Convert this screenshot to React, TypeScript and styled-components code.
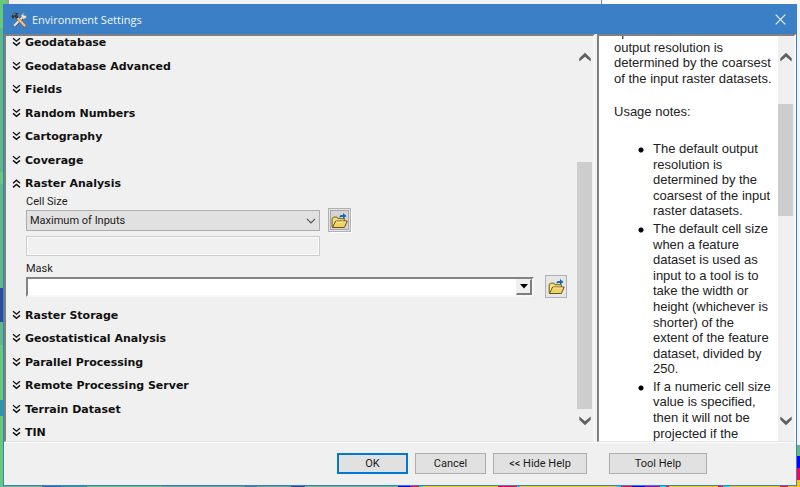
import React from "react";
import styled, { createGlobalStyle } from "styled-components";

const GlobalStyle = createGlobalStyle`
  * { box-sizing: border-box; }
  body { margin: 0; }
  button, input, select { font: inherit; color: inherit; margin: 0; border-radius: 0; }
`;

const Desktop = styled.div`
  height: 100vh;
  padding: 4px 3px 1px;
  display: flex;
  font: 11px Roboto, "Noto Sans", sans-serif;
  color: #1c1c1c;
  background:
    linear-gradient(90deg, #67c87a 0 7px, #9a9a9a 7px 9px, #f0f0f0 9px 601px, #8c8c8c 601px 602px, #fafafa 602px) top / 100% 4px no-repeat,
    linear-gradient(90deg, #63bd85 0 42px, #2a70b8 42px 61px, #2f9a9c 61px 87px, #67c87a 87px 162px, #55a98c 162px 245px, #3a86a0 245px 257px, #55a98c 257px 291px, #2a4d9c 291px 305px, #63bd85 305px 398px, #0000ff 398px 410px, #ff0050 410px 419px, #00e5f5 419px 423px, #ffc400 423px 498px, #ff0050 498px 517px, #00e5f5 517px 520px, #ffc400 520px 616px, #00e5f5 616px 621px, #ff0050 621px 632px, #0000ff 632px 645px, #b000b0 645px 660px, #00e5f5 660px 666px, #ff0050 666px 669px, #ffc400 669px 718px, #ff0050 718px 723px, #00e5f5 723px 730px, #ffc400 730px 780px, #ff0050 780px 788px, #ffc400 788px) bottom / 100% 1px no-repeat,
    linear-gradient(#f4f4f4 0 445px, #62b783 445px 456px, #0000ff 456px 468px, #ff0050 468px 480px, #ffc400 480px) right / 3px 100% no-repeat,
    linear-gradient(#67c87a 0 28px, #5fb888 28px 172px, #67c87a 172px 184px, #5fb888 184px 288px, #2a4d9c 288px 322px, #5fb888 322px 345px, #67c87a 345px 400px, #2b9aa6 400px 416px, #67c87a 416px) left / 3px 100% no-repeat;
`;

const Dialog = styled.main`
  flex: 1;
  min-width: 0;
  display: flex;
  flex-direction: column;
  background: #f0f0f0;
  border: 1px solid #3b80c6;
`;

const TitleBar = styled.header`
  flex: none;
  height: 29px;
  padding: 0 8px 0 7px;
  display: flex;
  align-items: center;
  gap: 5px;
  background: #3b80c6;
  color: #f2f7fc;
`;

const Title = styled.h1`
  flex: 1;
  margin: 0;
  font: 11px "Open Sans", "Noto Sans", sans-serif;
`;

const CloseButton = styled.button`
  padding: 0;
  width: 16px;
  height: 16px;
  display: grid;
  place-items: center;
  border: 0;
  background: none;
`;

const Panes = styled.div`
  flex: 1;
  min-height: 0;
  display: flex;
  gap: 2px;
  border-bottom: 1px solid #fff;
`;

const Pane = styled.section<{ $help?: boolean }>`
  flex: ${(p) => (p.$help ? "0 0 199px" : "1")};
  min-width: 0;
  display: flex;
  overflow: hidden;
  border: 2px solid;
  border-color: #808080 #f7f7f7 #e3e3e3 #808080;
  border-bottom-width: 1px;
  background: ${(p) => (p.$help ? "#fff" : "#f0f0f0")};
`;

const Settings = styled.div`
  flex: 1;
  min-width: 0;
  padding: 0 10px 0 6px;
`;

const Group = styled.div<{ $height: number }>`
  height: ${(p) => p.$height}px;
  display: flex;
  flex-direction: column;
  justify-content: space-between;
`;

const SectionButton = styled.button`
  padding: 0;
  height: 14px;
  display: flex;
  align-items: center;
  gap: 4px;
  border: 0;
  background: none;
  color: #111;
  font: bold 11px/14px "DejaVu Sans", sans-serif;
  white-space: nowrap;
`;

const Fields = styled.div`
  padding: 5px 0 11px 14px;
  display: flex;
  flex-direction: column;
`;

const Label = styled.label`
  height: 12px;
  line-height: 12px;
`;

const FieldRow = styled.div<{ $gap: number }>`
  display: flex;
  align-items: center;
  gap: ${(p) => p.$gap}px;
`;

const SelectBox = styled.div`
  width: 294px;
  position: relative;
  svg { position: absolute; right: 4px; top: 8px; pointer-events: none; }
`;

const Select = styled.select`
  width: 100%;
  height: 21px;
  padding: 0 3px;
  appearance: none;
  border: 1px solid #adadad;
  background: #e1e1e1;
`;

const SizeInput = styled.input`
  width: 294px;
  height: 20px;
  margin: 4px 0 7px;
  border: 1px solid #ccc;
  outline: 1px solid #fafafa;
  outline-offset: -2px;
  background: #f0f0f0;
`;

const Combo = styled.div`
  width: 508px;
  height: 20px;
  display: flex;
  border: 2px solid;
  border-color: #848484 #f7f7f7 #f7f7f7 #848484;
  background: #fff;
`;

const ComboInput = styled.input`
  flex: 1;
  min-width: 0;
  padding: 0 2px;
  border: 0;
  outline: 0;
  background: none;
`;

const ComboButton = styled.button`
  width: 16px;
  padding: 0;
  display: grid;
  place-items: center;
  border: solid;
  border-width: 1px 2px 2px 1px;
  border-color: #f0f0f0 #7d7d7d #7d7d7d #f0f0f0;
  background: #f0f0f0;
`;

const BrowseButton = styled.button<{ $focused?: boolean }>`
  flex: none;
  width: ${(p) => (p.$focused ? 23 : 22)}px;
  height: ${(p) => (p.$focused ? 24 : 23)}px;
  padding: 0;
  display: grid;
  place-items: center;
  border: 1px solid #b0b0b0;
  background: ${(p) => (p.$focused ? "#d4d4d4" : "#e6e6e6")};
  box-shadow: ${(p) => (p.$focused ? "inset 0 0 0 1px #e2e2e2, inset 0 0 0 2px #a8a8a8, 1px 1px 0 #fff" : "none")};
`;

const ScrollBar = styled.div<{ $track: string }>`
  flex: none;
  width: 16px;
  padding: 13px 0 12px;
  display: flex;
  flex-direction: column;
  background: ${(p) => p.$track};
`;

const ScrollButton = styled.button`
  flex: none;
  height: 16px;
  padding: 0 1px 0 0;
  display: grid;
  place-items: center;
  border: 0;
  background: none;
`;

const Track = styled.div<{ $before: number; $thumb: number; $after: number }>`
  flex: 1;
  display: grid;
  grid-template-rows: ${(p) => `${p.$before}fr ${p.$thumb}fr ${p.$after}fr`};
  &::before { content: ""; }
`;

const Thumb = styled.div`
  background: #cdcdcd;
  margin-right: 1px;
`;

const HelpText = styled.article`
  flex: 1;
  min-width: 0;
  padding: 0 0 0 15px;
  font: 13px/1.2 "Liberation Sans", Arial, sans-serif;
  color: #222;
  white-space: nowrap;
`;

const HelpScroll = styled.div`
  margin-top: -12px;
`;

const Paragraph = styled.p`
  margin: 0 0 18px;
`;

const List = styled.ul`
  margin: 0;
  padding: 3px 0 0 24px;
  list-style: none;
`;

const Item = styled.li`
  margin-bottom: 2px;
  padding-left: 15px;
  background: radial-gradient(circle at 3px 9px, #000 2px, transparent 3px);
`;

const Footer = styled.footer`
  flex: none;
  height: 42px;
  padding: 0 89px 1px 0;
  display: flex;
  align-items: center;
  justify-content: flex-end;
  gap: 7px;
`;

const PushButton = styled.button<{ $width: number; $primary?: boolean; $apart?: boolean }>`
  width: ${(p) => p.$width}px;
  height: 21px;
  margin-left: ${(p) => (p.$apart ? 15 : 0)}px;
  padding: 0;
  border: ${(p) => (p.$primary ? "2px solid #0078d7" : "1px solid #adadad")};
  background: #e1e1e1;
`;

const Chevrons = ({ up }: { up?: boolean }) => (
  <svg width="9" height="12" viewBox="0 0 9 12" fill="none" stroke="#111" strokeWidth="1.4">
    {up ? <path d="M1 5.2 4.5 2.2 8 5.2M1 9.4 4.5 6.4 8 9.4" /> : <path d="M1 1.2 4.5 4.2 8 1.2M1 5.4 4.5 8.4 8 5.4" />}
  </svg>
);

const Arrow = ({ up }: { up?: boolean }) => (
  <svg width="12" height="10" viewBox="0 0 12 10" fill="#606060">
    {up ? <path d="M6 .7 11.7 6.3V9.6L6 4.8.3 9.6V6.3z" /> : <path d="M6 9.3 11.7 3.7V.4L6 5.2.3.4v3.3z" />}
  </svg>
);

const Folder = () => (
  <svg width="17" height="17" viewBox="0 0 17 17">
    <path d="M1 15V6.5L2.5 5H6l1.2 1.5h6.3V9L3 15.5z" fill="#c9a73c" stroke="#7a6420" strokeWidth=".8" />
    <path d="M2 14.5V7.2L3 6h2.5L7 7.5h5.5V9z" fill="#f3e28c" />
    <path d="M1.5 15.5 4.6 9H16.2L13.4 15.5z" fill="#f0d264" stroke="#59480f" strokeWidth=".9" />
    <path d="M5 10h9.7" stroke="#fff2b0" />
    <path d="M8.3 5.4Q8.3 3 10.5 3H12V1l3.5 3L12 6.8V5h-1.5z" fill="#1769ad" />
  </svg>
);

const Tools = () => (
  <svg width="16" height="16" viewBox="0 0 16 16" fill="none">
    <path d="M3.6 13.8 11.8 5.2" stroke="#58493f" strokeWidth="3" />
    <path d="M3.2 13.7 11.5 5.2" stroke="#e7e5df" strokeWidth="2.2" />
    <path d="M10 3.7 12.8.6 12.6 3.3 15.6 3.7 15.2 6 12.2 7.3z" fill="#e4e6e7" stroke="#777" strokeWidth=".5" />
    <path d="M6 5.5 13.8 14" stroke="#9a6a45" strokeWidth="3.2" strokeLinecap="round" />
    <path d="M7.2 6.8 13.6 13.5" stroke="#ecc094" strokeWidth="2" strokeLinecap="round" />
    <path d="M.4 4.8 1.6 2.2 4.5.7 8 1.2 6 2.6 7.4 5 5.3 7 3.7 4.8 2 7z" fill="#37383a" />
    <path d="M2 3.2 4.8 1.8" stroke="#a2a7aa" strokeWidth=".8" />
  </svg>
);

const Section = ({ name, open }: { name: string; open?: boolean }) => (
  <SectionButton type="button" aria-expanded={!!open}>
    <Chevrons up={open} />
    {name}
  </SectionButton>
);

const Scroll = ({ before, thumb, after, track }: { before: number; thumb: number; after: number; track: string }) => (
  <ScrollBar $track={track}>
    <ScrollButton type="button" aria-label="Scroll up"><Arrow up /></ScrollButton>
    <Track $before={before} $thumb={thumb} $after={after}><Thumb /></Track>
    <ScrollButton type="button" aria-label="Scroll down"><Arrow /></ScrollButton>
  </ScrollBar>
);

const above = ["Geodatabase", "Geodatabase Advanced", "Fields", "Random Numbers", "Cartography", "Coverage"];
const below = ["Raster Storage", "Geostatistical Analysis", "Parallel Processing", "Remote Processing Server", "Terrain Dataset", "TIN"];

const notes = [
  ["The default output", "resolution is", "determined by the", "coarsest of the input", "raster datasets."],
  ["The default cell size", "when a feature", "dataset is used as", "input to a tool is to", "take the width or", "height (whichever is", "shorter) of the", "extent of the feature", "dataset, divided by", "250."],
  ["If a numeric cell size", "value is specified,", "then it will not be", "projected if the"],
];

const Lines = ({ of }: { of: string[] }) => (
  <>
    {of.map((line, i) => (
      <React.Fragment key={line}>
        {i > 0 && <br />}
        {line}
      </React.Fragment>
    ))}
  </>
);

export default function App() {
  return (
    <Desktop>
      <GlobalStyle />
      <Dialog>
        <TitleBar>
          <Tools />
          <Title>Environment Settings</Title>
          <CloseButton type="button" aria-label="Close">
            <svg width="11" height="11" viewBox="0 0 11 11" stroke="#eef5fc" strokeWidth="1.2">
              <path d="M.7.7 10.3 10.3M10.3.7.7 10.3" />
            </svg>
          </CloseButton>
        </TitleBar>
        <Panes>
          <Pane>
            <Settings>
              <Group $height={155}>
                {above.map((name) => <Section key={name} name={name} />)}
                <Section name="Raster Analysis" open />
              </Group>
              <Fields>
                <Label htmlFor="cell-size">Cell Size</Label>
                <FieldRow $gap={8}>
                  <SelectBox>
                    <Select id="cell-size"><option>Maximum of Inputs</option></Select>
                    <svg width="10" height="6" viewBox="0 0 10 6" fill="none" stroke="#555" strokeWidth="1.2">
                      <path d="M1 .8 5 4.8 9 .8" />
                    </svg>
                  </SelectBox>
                  <BrowseButton type="button" aria-label="Browse cell size" $focused><Folder /></BrowseButton>
                </FieldRow>
                <SizeInput disabled aria-label="Cell size value" />
                <Label htmlFor="mask">Mask</Label>
                <FieldRow $gap={11}>
                  <Combo>
                    <ComboInput id="mask" />
                    <ComboButton type="button" aria-label="Show masks">
                      <svg width="8" height="5" viewBox="0 0 8 5"><path d="M0 0h8L4 4.5z" /></svg>
                    </ComboButton>
                  </Combo>
                  <BrowseButton type="button" aria-label="Browse mask"><Folder /></BrowseButton>
                </FieldRow>
              </Fields>
              <Group $height={131}>
                {below.map((name) => <Section key={name} name={name} />)}
              </Group>
            </Settings>
            <Scroll before={97} thumb={247} after={4} track="#f0f0f0" />
          </Pane>
          <Pane $help>
            <HelpText>
              <HelpScroll>
                <Paragraph>
                  <Lines of={["operation. The default", "output resolution is", "determined by the coarsest", "of the input raster datasets."]} />
                </Paragraph>
                <Paragraph>Usage notes:</Paragraph>
                <List>
                  {notes.map((note) => <Item key={note[0]}><Lines of={note} /></Item>)}
                </List>
              </HelpScroll>
            </HelpText>
            <Scroll before={39} thumb={112} after={197} track="#f0f0f0" />
          </Pane>
        </Panes>
        <Footer>
          <PushButton type="button" $width={71} $primary>OK</PushButton>
          <PushButton type="button" $width={71}>Cancel</PushButton>
          <PushButton type="button" $width={94}>&lt;&lt; Hide Help</PushButton>
          <PushButton type="button" $width={98} $apart>Tool Help</PushButton>
        </Footer>
      </Dialog>
    </Desktop>
  );
}
